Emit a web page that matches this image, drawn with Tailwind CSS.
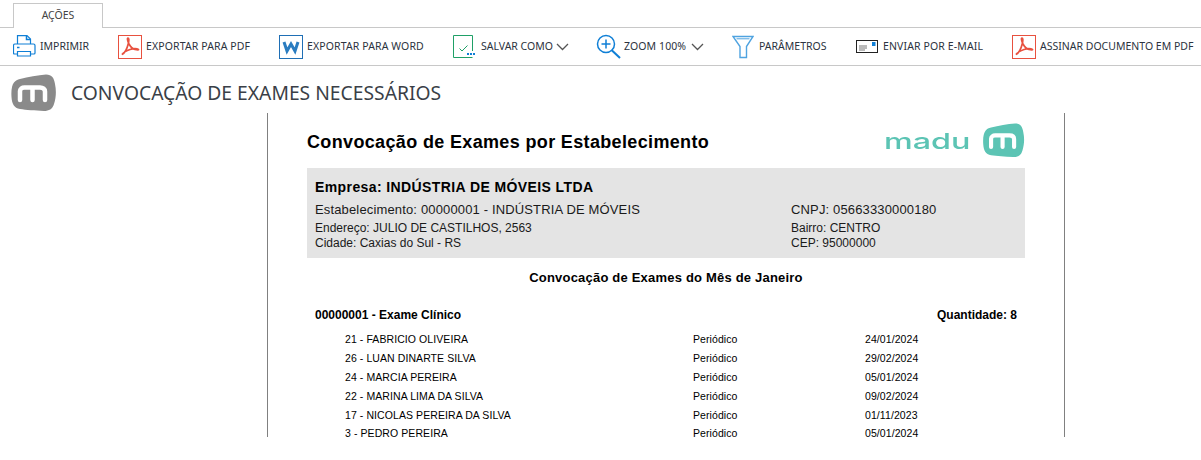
<!DOCTYPE html>
<html lang="pt-BR">
<head>
    <meta charset="UTF-8">
    <title>Convocação de Exames</title>
    <script src="https://cdn.jsdelivr.net/npm/@tailwindcss/browser@4"></script>
</head>
<body class="bg-white h-[460px] overflow-hidden font-['Liberation_Sans',sans-serif] text-black">

    <!-- Abas -->
    <div class="h-[28px] pt-[3px] pl-[13px] border-b border-[#c8c8c8]">
        <div class="w-[90px] h-[25px] border border-b-0 border-[#c8c8c8] bg-white flex items-center justify-center text-[10.5px] text-[#444] font-['Noto_Sans',sans-serif]">AÇÕES</div>
    </div>

    <!-- Barra de ações -->
    <div class="h-[38px] border-b border-[#c8c8c8] flex items-center pl-[13px] text-[10.5px] text-[#2c3340] font-['Noto_Sans',sans-serif] whitespace-nowrap">
        <div class="flex items-center w-[105px]">
            <svg class="w-[23px] h-[23px] mr-[4px]" viewBox="0 0 23 23" fill="none" stroke="#0f7fd6" stroke-width="1.200"><path d="M4.500 9V.6h9.500l3.500 3.500V9"/><path d="M13.500 1v3.500h3.500" stroke-width="1.500"/><path d="M4.500 9H2a1.500 1.500 0 0 0-1.500 1.500V18a1 1 0 0 0 1 1h3M17.500 19h3.500a1 1 0 0 0 1-1v-7.500A1.500 1.500 0 0 0 20.500 9h-3M4.500 9h13"/><path d="M4.500 16.500h13v4.500h-13z"/><path d="M4 12.500h2.500" stroke-width="1.500"/></svg>
            <span>IMPRIMIR</span>
        </div>
        <div class="flex items-center w-[161px]">
            <svg class="w-[24px] h-[24px] mr-[4px]" viewBox="0 0 24 24" fill="none"><rect x=".5" y=".5" width="23" height="23" stroke="#e8513f"/><path d="M4 19.500C7 18 9.500 12 10.500 8 11 5 11 3 10 3S9.500 6 11 9c2 3.500 4 5 6 5.500 2 .5 4 .5 3.500 0-1.500-1-5.500-1-8.500 0-3 1-6.500 3-8 5z" stroke="#e8513f" stroke-width="1.700"/></svg>
            <span class="tracking-[0.12px]">EXPORTAR PARA PDF</span>
        </div>
        <div class="flex items-center w-[174px]">
            <svg class="w-[24px] h-[24px] mr-[4px]" viewBox="0 0 24 24" fill="none"><rect x=".5" y=".5" width="23" height="23" stroke="#1f6fb5"/><path d="M5 7l3 9 4-7 4 7 3-9" stroke="#2a7cc0" stroke-width="3"/></svg>
            <span class="tracking-[0.12px]">EXPORTAR PARA WORD</span>
        </div>
        <div class="flex items-center w-[143px]">
            <svg class="w-[22px] h-[23px] mr-[6px]" viewBox="0 0 22 23" fill="none"><path d="M19.500 16V.5H.5v22h19" stroke="#1fa067"/><path d="M6.500 13.500l2.500 2.500 5.500-5.500" stroke="#1fa067"/><path d="M14 19h2M17 19h2M20 19h2" stroke="#0f7fd6" stroke-width="2"/></svg>
            <span>SALVAR COMO</span>
            <svg class="w-[13px] h-[8px] ml-[3px]" viewBox="0 0 13 8" fill="none" stroke="#555" stroke-width="1.300"><path d="M1 1l5.500 5.500L12 1"/></svg>
        </div>
        <div class="flex items-center w-[136px]">
            <svg class="w-[25px] h-[25px] mr-[3px]" viewBox="0 0 25 25" fill="none" stroke="#0f7fd6"><circle cx="10" cy="10" r="8.500" stroke-width="1.500"/><path d="M15.500 16l8.500 8" stroke-width="2"/><path d="M10 5.500v9M5.500 10h9" stroke-width="1.500"/></svg>
            <span class="tracking-[0.1px]">ZOOM 100%</span>
            <svg class="w-[13px] h-[8px] ml-[5px]" viewBox="0 0 13 8" fill="none" stroke="#555" stroke-width="1.300"><path d="M1 1l5.500 5.500L12 1"/></svg>
        </div>
        <div class="flex items-center w-[124px]">
            <svg class="w-[22px] h-[24px] mr-[5px]" viewBox="0 0 22 24" fill="none" stroke="#4fa3e0" stroke-width="1.400"><path d="M1 1.500h20L14.500 11.500V22.500h-6.500V11.500z"/><path d="M4.500 3.800h13" stroke-width="1"/></svg>
            <span>PARÂMETROS</span>
        </div>
        <div class="flex items-center w-[156px]">
            <svg class="w-[22px] h-[13px] mr-[5px]" viewBox="0 0 22 13" fill="none"><rect x=".5" y=".5" width="21" height="12" stroke="#222"/><path d="M3 6h8M3 8h8M3 10h6" stroke="#777"/><rect x="16" y="2" width="3.500" height="4" fill="#0f7fd6"/></svg>
            <span class="tracking-[0.12px]">ENVIAR POR E-MAIL</span>
        </div>
        <div class="flex items-center">
            <svg class="w-[24px] h-[24px] mr-[4px]" viewBox="0 0 24 24" fill="none"><rect x=".5" y=".5" width="23" height="23" stroke="#e8513f"/><path d="M4 19.500C7 18 9.500 12 10.500 8 11 5 11 3 10 3S9.500 6 11 9c2 3.500 4 5 6 5.500 2 .5 4 .5 3.500 0-1.500-1-5.500-1-8.500 0-3 1-6.500 3-8 5z" stroke="#e8513f" stroke-width="1.700"/></svg>
            <span>ASSINAR DOCUMENTO EM PDF</span>
        </div>
    </div>

    <!-- Título -->
    <div class="h-[47px] flex items-start pl-[11px] pt-[8px]">
        <svg class="w-[45px] h-[38px] mr-[15px] blur-[0.4px]" viewBox="0 0 45 38"><path d="M9 5C17 3 27 1 35 .5c6 0 8 3.500 9 9.500 1.500 7 1 14-1 20-1.500 5-5 7-10 7-9-.5-18-1-24-2-6-1-8-5-8.500-12C0 16 1 11 3 8.500 4.500 6.500 6.500 5.500 9 5z" fill="#8a8a8a"/><path d="M9 26V17c0-2 2-3.500 4.500-3.500H29c3 0 5 1.500 5 4V26M21.500 14v12" fill="none" stroke="#fff" stroke-width="4.500" stroke-linecap="round"/></svg>
        <h1 class="text-[19.3px] leading-[38px] text-[#3a3f47] font-['Noto_Sans',sans-serif] whitespace-nowrap">CONVOCAÇÃO DE EXAMES NECESSÁRIOS</h1>
    </div>

    <!-- Documento -->
    <div class="ml-[267px] w-[798px] h-[324px] border-x border-[#808080] pl-[39px] pr-[39px]">
        <div class="h-[55px] flex justify-between items-start pt-[11px]">
            <h2 class="text-[18px] leading-[36px] font-bold whitespace-nowrap tracking-[0.35px]">Convocação de Exames por Estabelecimento</h2>
            <div class="flex items-center -mt-[1px]">
                <span class="w-[98px] pt-[1px] text-[22px] leading-[34px] text-[#5cc4b4] font-['Inter',sans-serif] font-medium origin-left scale-x-[1.47]">madu</span>
                <svg class="w-[43px] h-[35px]" viewBox="0 0 45 38"><path d="M9 5C17 3 27 1 35 .5c6 0 8 3.500 9 9.500 1.500 7 1 14-1 20-1.500 5-5 7-10 7-9-.5-18-1-24-2-6-1-8-5-8.500-12C0 16 1 11 3 8.500 4.500 6.500 6.500 5.500 9 5z" fill="#5cc4b4"/><path d="M9 26V17c0-2 2-3.500 4.500-3.500H29c3 0 5 1.500 5 4V26M21.500 14v12" fill="none" stroke="#fff" stroke-width="4.500" stroke-linecap="round"/></svg>
            </div>
        </div>

        <div class="bg-[#e4e4e4] h-[90px] px-[8px] pt-[9px] text-[#1a1a1a]">
            <div class="text-[14px] leading-[20px] font-bold text-black tracking-[0.4px]">Empresa: INDÚSTRIA DE MÓVEIS LTDA</div>
            <div class="grid grid-cols-[476px_1fr] text-[12px] leading-[15px] mt-[2px]">
                <div class="text-[13px] leading-[22px] tracking-[0.15px]">Estabelecimento: 00000001 - INDÚSTRIA DE MÓVEIS</div>
                <div class="text-[13px] leading-[22px] tracking-[0.15px]">CNPJ: 05663330000180</div>
                <div>Endereço: JULIO DE CASTILHOS, 2563</div>
                <div>Bairro: CENTRO</div>
                <div>Cidade: Caxias do Sul - RS</div>
                <div>CEP: 95000000</div>
            </div>
        </div>

        <div class="text-center text-[13px] leading-[16px] font-bold mt-[12px] tracking-[0.2px]">Convocação de Exames do Mês de Janeiro</div>

        <div class="flex justify-between px-[8px] mt-[21px] text-[12px] leading-[16px] font-bold">
            <span>00000001 - Exame Clínico</span>
            <span>Quantidade: 8</span>
        </div>

        <div class="mt-[7px] pl-[38px] text-[10.5px] leading-[19px] tracking-[0.08px]">
            <div class="grid grid-cols-[348px_172px_1fr]"><span>21 - FABRICIO OLIVEIRA</span><span>Periódico</span><span>24/01/2024</span></div>
            <div class="grid grid-cols-[348px_172px_1fr]"><span>26 - LUAN DINARTE SILVA</span><span>Periódico</span><span>29/02/2024</span></div>
            <div class="grid grid-cols-[348px_172px_1fr]"><span>24 - MARCIA PEREIRA</span><span>Periódico</span><span>05/01/2024</span></div>
            <div class="grid grid-cols-[348px_172px_1fr]"><span>22 - MARINA LIMA DA SILVA</span><span>Periódico</span><span>09/02/2024</span></div>
            <div class="grid grid-cols-[348px_172px_1fr] leading-[18px]"><span>17 - NICOLAS PEREIRA DA SILVA</span><span>Periódico</span><span>01/11/2023</span></div>
            <div class="grid grid-cols-[348px_172px_1fr]"><span>3 - PEDRO PEREIRA</span><span>Periódico</span><span>05/01/2024</span></div>
        </div>
    </div>
</body>
</html>
